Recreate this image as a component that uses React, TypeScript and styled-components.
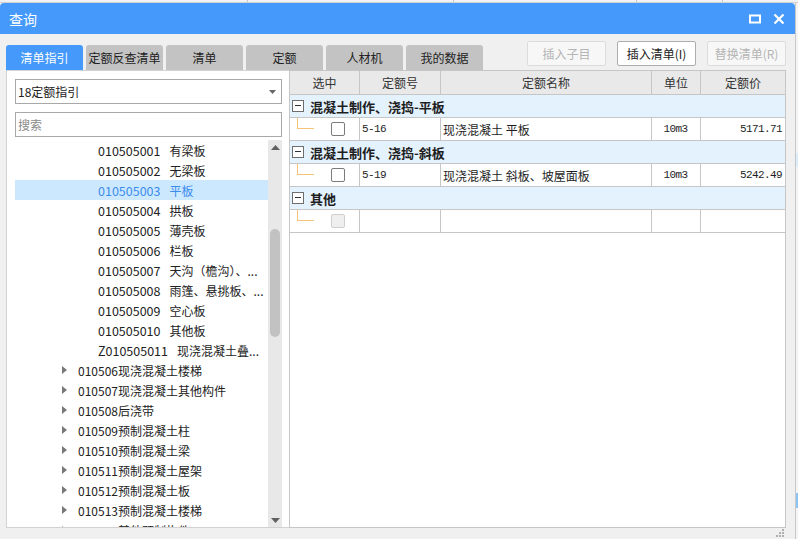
import { FC } from 'react';
import styled, { createGlobalStyle } from 'styled-components';

const GlobalStyle = createGlobalStyle`
    html, body {
        margin: 0;
        padding: 0;
    }
    body {
        width: 798px;
        height: 539px;
        overflow: hidden;
        background: #f6f6f6;
        font-family: "Noto Sans CJK SC", "Noto Sans", sans-serif;
        color: #222;
    }
`;

const tabs = ['清单指引', '定额反查清单', '清单', '定额', '人材机', '我的数据'];

interface TreeItem {
    code: string;
    name: string;
    branch?: boolean;
    selected?: boolean;
}

const treeItems: TreeItem[] = [
    { code: '010505001', name: '有梁板' },
    { code: '010505002', name: '无梁板' },
    { code: '010505003', name: '平板', selected: true },
    { code: '010505004', name: '拱板' },
    { code: '010505005', name: '薄壳板' },
    { code: '010505006', name: '栏板' },
    { code: '010505007', name: '天沟（檐沟）、...' },
    { code: '010505008', name: '雨篷、悬挑板、...' },
    { code: '010505009', name: '空心板' },
    { code: '010505010', name: '其他板' },
    { code: 'Z010505011', name: '现浇混凝土叠...' },
    { code: '010506', name: '现浇混凝土楼梯', branch: true },
    { code: '010507', name: '现浇混凝土其他构件', branch: true },
    { code: '010508', name: '后浇带', branch: true },
    { code: '010509', name: '预制混凝土柱', branch: true },
    { code: '010510', name: '预制混凝土梁', branch: true },
    { code: '010511', name: '预制混凝土屋架', branch: true },
    { code: '010512', name: '预制混凝土板', branch: true },
    { code: '010513', name: '预制混凝土楼梯', branch: true },
    { code: '010514', name: '其他预制构件', branch: true },
];

interface QuotaGroup {
    title: string;
    row: { code: string; name: string; unit: string; price: string } | null;
}

const groups: QuotaGroup[] = [
    { title: '混凝土制作、浇捣-平板', row: { code: '5-16', name: '现浇混凝土 平板', unit: '10m3', price: '5171.71' } },
    { title: '混凝土制作、浇捣-斜板', row: { code: '5-19', name: '现浇混凝土 斜板、坡屋面板', unit: '10m3', price: '5242.49' } },
    { title: '其他', row: null },
];

const App: FC = () => {
    return (
        <>
            <GlobalStyle />
            <Page>
                <BackStrip />
                <Dialog>
                    <TitleBar>
                        <TitleText>查询</TitleText>
                        <WindowButtons>
                            <svg width="12" height="10" viewBox="0 0 12 10">
                                <rect x="1" y="1.5" width="10" height="7" fill="none" stroke="#fff" strokeWidth="2" />
                            </svg>
                            <svg width="12" height="12" viewBox="0 0 12 12">
                                <path d="M1.5 1.5 L10.5 10.5 M10.5 1.5 L1.5 10.5" stroke="#fff" strokeWidth="2.2" />
                            </svg>
                        </WindowButtons>
                    </TitleBar>
                    <Body>
                        <Header>
                            <Tabs>
                                {tabs.map((t, i) => (
                                    <Tab key={t} $active={i === 0}>{t}</Tab>
                                ))}
                            </Tabs>
                            <Actions>
                                <ActionButton $disabled>插入子目</ActionButton>
                                <ActionButton>插入清单(I)</ActionButton>
                                <ActionButton $disabled>替换清单(R)</ActionButton>
                            </Actions>
                        </Header>
                        <Main>
                            <LeftPanel>
                                <Select>
                                    <span>18定额指引</span>
                                    <svg width="7" height="4" viewBox="0 0 7 4">
                                        <path d="M0 0 H7 L3.5 4 Z" fill="#666" />
                                    </svg>
                                </Select>
                                <Search>搜索</Search>
                                <Tree>
                                    <TreeList>
                                        {treeItems.map((item) =>
                                            item.branch ? (
                                                <TreeRow key={item.code} $indent={47}>
                                                    <Arrow>
                                                        <svg width="5" height="8" viewBox="0 0 5 8">
                                                            <path d="M0 0 L5 4 L0 8 Z" fill="#777" />
                                                        </svg>
                                                    </Arrow>
                                                    <span>{item.code}{item.name}</span>
                                                </TreeRow>
                                            ) : (
                                                <TreeRow key={item.code} $indent={83} $selected={item.selected}>
                                                    <Code>{item.code}</Code>
                                                    <span>{item.name}</span>
                                                </TreeRow>
                                            )
                                        )}
                                    </TreeList>
                                    <ScrollBar>
                                        <ScrollArrow>
                                            <svg width="9" height="5" viewBox="0 0 9 5">
                                                <path d="M0 5 L4.5 0 L9 5 Z" fill="#606060" />
                                            </svg>
                                        </ScrollArrow>
                                        <ScrollTrack>
                                            <Thumb />
                                        </ScrollTrack>
                                        <ScrollArrow>
                                            <svg width="9" height="5" viewBox="0 0 9 5">
                                                <path d="M0 0 L9 0 L4.5 5 Z" fill="#606060" />
                                            </svg>
                                        </ScrollArrow>
                                    </ScrollBar>
                                </Tree>
                            </LeftPanel>
                            <TablePanel>
                                <HeadRow>
                                    <HeadCell>选中</HeadCell>
                                    <HeadCell>定额号</HeadCell>
                                    <HeadCell>定额名称</HeadCell>
                                    <HeadCell>单位</HeadCell>
                                    <HeadCell $last>定额价</HeadCell>
                                </HeadRow>
                                {groups.map((g) => (
                                    <div key={g.title}>
                                        <GroupRow>
                                            <MinusBox />
                                            {g.title}
                                        </GroupRow>
                                        <DataRow>
                                            <CheckCell>
                                                <TreeLine />
                                                <Checkbox $disabled={!g.row} />
                                            </CheckCell>
                                            <Cell $mono>{g.row?.code}</Cell>
                                            <Cell>{g.row?.name}</Cell>
                                            <Cell $mono $align="center">{g.row?.unit}</Cell>
                                            <Cell $mono $align="right" $last>{g.row?.price}</Cell>
                                        </DataRow>
                                    </div>
                                ))}
                            </TablePanel>
                        </Main>
                        <Footer>
                            <svg width="8" height="8" viewBox="0 0 8 8">
                                <rect x="6" y="0" width="2" height="2" fill="#b0b0b0" />
                                <rect x="3" y="3" width="2" height="2" fill="#b0b0b0" />
                                <rect x="6" y="3" width="2" height="2" fill="#b0b0b0" />
                                <rect x="0" y="6" width="2" height="2" fill="#b0b0b0" />
                                <rect x="3" y="6" width="2" height="2" fill="#b0b0b0" />
                                <rect x="6" y="6" width="2" height="2" fill="#b0b0b0" />
                            </svg>
                        </Footer>
                    </Body>
                </Dialog>
                <SideStrip />
            </Page>
        </>
    );
};

const Page = styled.div`
    width: 798px;
    height: 539px;
    display: grid;
    grid-template-columns: 795px 3px;
    grid-template-rows: 3px 536px;
`;

const BackStrip = styled.div`
    grid-column: 1 / 3;
    background:
        linear-gradient(#c8c8c8, #c8c8c8) 247px 0 / 1px 3px no-repeat,
        linear-gradient(#c8c8c8, #c8c8c8) 453px 0 / 1px 3px no-repeat,
        linear-gradient(#c8c8c8, #c8c8c8) 636px 0 / 1px 3px no-repeat,
        linear-gradient(#c8c8c8, #c8c8c8) 722px 0 / 1px 3px no-repeat,
        #f2f2f2;
    border-bottom: 1px solid #d0d0d0;
    box-sizing: border-box;
`;

const SideStrip = styled.div`
    background:
        linear-gradient(#d9ecfc, #d9ecfc) 0 150px / 3px 14px no-repeat,
        linear-gradient(#8cc4f4, #8cc4f4) 0 490px / 3px 15px no-repeat,
        #f4f4f4;
    border-left: 1px solid #c8c8c8;
    box-sizing: border-box;
`;

const Dialog = styled.div`
    display: flex;
    flex-direction: column;
    background: #f0f0f0;
    border-radius: 4px 4px 0 0;
    overflow: hidden;
`;

const TitleBar = styled.div`
    height: 31px;
    flex: 0 0 31px;
    background: #4499fb;
    display: flex;
    align-items: center;
    justify-content: space-between;
    padding: 0 9px 0 9px;
`;

const TitleText = styled.div`
    color: #fff;
    font-size: 14px;
    line-height: 1;
`;

const WindowButtons = styled.div`
    display: flex;
    align-items: center;
    gap: 12px;
    padding-right: 1px;
`;

const Body = styled.div`
    flex: 1;
    display: flex;
    flex-direction: column;
    padding: 7px 9px 0 6px;
`;

const Header = styled.div`
    height: 29px;
    display: flex;
    align-items: flex-end;
`;

const Tabs = styled.div`
    display: flex;
    gap: 3px;
`;

const Tab = styled.div<{ $active?: boolean }>`
    width: 77px;
    height: 25px;
    display: flex;
    align-items: center;
    justify-content: center;
    border-radius: 3px 3px 0 0;
    font-size: 12px;
    background: ${({ $active }) => ($active ? '#4499fb' : '#c3c3c3')};
    color: ${({ $active }) => ($active ? '#fff' : '#222')};
    white-space: nowrap;
`;

const Actions = styled.div`
    margin-left: auto;
    align-self: flex-start;
    display: flex;
    gap: 11px;
`;

const ActionButton = styled.div<{ $disabled?: boolean }>`
    width: 79px;
    height: 25px;
    box-sizing: border-box;
    display: flex;
    align-items: center;
    justify-content: center;
    border-radius: 2px;
    font-size: 12px;
    background: ${({ $disabled }) => ($disabled ? '#f7f7f7' : '#fff')};
    border: 1px solid ${({ $disabled }) => ($disabled ? '#dcdcdc' : '#adadad')};
    color: ${({ $disabled }) => ($disabled ? '#b4b4b4' : '#222')};
`;

const Main = styled.div`
    height: 458px;
    display: flex;
`;

const LeftPanel = styled.div`
    width: 283px;
    box-sizing: border-box;
    background: #fff;
    border: 1px solid #d2d2d2;
    border-right: none;
    padding: 8px 7px 0 8px;
    display: flex;
    flex-direction: column;
`;

const Select = styled.div`
    height: 25px;
    box-sizing: border-box;
    border: 1px solid #a8a8a8;
    display: flex;
    align-items: center;
    justify-content: space-between;
    padding: 0 5px 0 2px;
    font-size: 12px;
    color: #222;
`;

const Search = styled.div`
    margin-top: 8px;
    height: 25px;
    box-sizing: border-box;
    border: 1px solid #a8a8a8;
    display: flex;
    align-items: center;
    padding: 0 2px;
    font-size: 12px;
    color: #8a8a8a;
`;

const Tree = styled.div`
    margin-top: 3px;
    flex: 1;
    min-height: 0;
    display: flex;
    overflow: hidden;
`;

const TreeList = styled.div`
    flex: 1;
    overflow: hidden;
`;

const TreeRow = styled.div<{ $indent: number; $selected?: boolean }>`
    height: 20px;
    display: flex;
    align-items: center;
    padding-left: ${({ $indent }) => $indent}px;
    font-size: 12px;
    white-space: nowrap;
    background: ${({ $selected }) => ($selected ? '#cce8ff' : 'transparent')};
    color: ${({ $selected }) => ($selected ? '#3b8ced' : '#222')};
`;

const Arrow = styled.span`
    width: 16px;
    display: flex;
    align-items: center;
`;

const Code = styled.span`
    margin-right: 9px;
    font-size: 12.5px;
`;

const ScrollBar = styled.div`
    width: 14px;
    background: #e8e8e8;
    display: flex;
    flex-direction: column;
`;

const ScrollArrow = styled.div`
    height: 14px;
    display: flex;
    align-items: center;
    justify-content: center;
`;

const ScrollTrack = styled.div`
    flex: 1;
    padding-top: 75px;
    display: flex;
    justify-content: center;
`;

const Thumb = styled.div`
    width: 10px;
    height: 108px;
    border-radius: 5px;
    background: #c2c2c2;
`;

const TablePanel = styled.div`
    width: 497px;
    box-sizing: border-box;
    background: #fff;
    border: 1px solid #c6c6c6;
`;

const columns = '70px 81px 211px 49px 84px';

const HeadRow = styled.div`
    display: grid;
    grid-template-columns: ${columns};
    height: 24px;
    box-sizing: border-box;
    border-bottom: 1px solid #c6c6c6;
    background: #e9e9e9;
`;

const HeadCell = styled.div<{ $last?: boolean }>`
    display: flex;
    align-items: center;
    justify-content: center;
    font-size: 12px;
    color: #333;
    border-right: ${({ $last }) => ($last ? 'none' : '1px solid #c6c6c6')};
`;

const GroupRow = styled.div`
    height: 23px;
    box-sizing: border-box;
    border-bottom: 1px solid #c6c6c6;
    background: #e4f2fe;
    display: flex;
    align-items: center;
    padding-left: 2px;
    font-size: 13px;
    font-weight: 700;
    color: #1e1e1e;
`;

const MinusBox = styled.span`
    position: relative;
    width: 12px;
    height: 12px;
    box-sizing: border-box;
    border: 1px solid #6e6e6e;
    background: #fff;
    margin-right: 6px;

    &::after {
        content: '';
        position: absolute;
        left: 2px;
        right: 2px;
        top: 4px;
        height: 1px;
        background: #333;
    }
`;

const DataRow = styled.div`
    display: grid;
    grid-template-columns: ${columns};
    height: 23px;
    box-sizing: border-box;
    border-bottom: 1px solid #c6c6c6;
`;

const Cell = styled.div<{ $mono?: boolean; $align?: 'left' | 'center' | 'right'; $last?: boolean }>`
    display: flex;
    align-items: center;
    justify-content: ${({ $align }) =>
        $align === 'center' ? 'center' : $align === 'right' ? 'flex-end' : 'flex-start'};
    padding: 0 3px 0 2px;
    font-family: ${({ $mono }) =>
        $mono ? '"Liberation Mono", "DejaVu Sans Mono", monospace' : '"Noto Sans CJK SC", sans-serif'};
    font-size: ${({ $mono }) => ($mono ? '11px' : '12px')};
    letter-spacing: ${({ $mono }) => ($mono ? '-0.6px' : '0')};
    color: #1e1e1e;
    white-space: nowrap;
    overflow: hidden;
    border-right: ${({ $last }) => ($last ? 'none' : '1px solid #c6c6c6')};
`;

const CheckCell = styled.div`
    position: relative;
    display: flex;
    align-items: center;
    padding-left: 41px;
    border-right: 1px solid #c6c6c6;
`;

const TreeLine = styled.span`
    position: absolute;
    left: 7px;
    top: 0;
    width: 16px;
    height: 10px;
    border-left: 1px solid #f7c27a;
    border-bottom: 1px solid #f7c27a;
`;

const Checkbox = styled.span<{ $disabled?: boolean }>`
    width: 14px;
    height: 14px;
    box-sizing: border-box;
    border-radius: 2px;
    border: 1px solid ${({ $disabled }) => ($disabled ? '#cfcfcf' : '#7a7a7a')};
    background: ${({ $disabled }) => ($disabled ? '#efefef' : '#fff')};
`;

const Footer = styled.div`
    flex: 1;
    display: flex;
    justify-content: flex-end;
    align-items: flex-end;
    padding: 0 2px 2px 0;
`;

export default App;
